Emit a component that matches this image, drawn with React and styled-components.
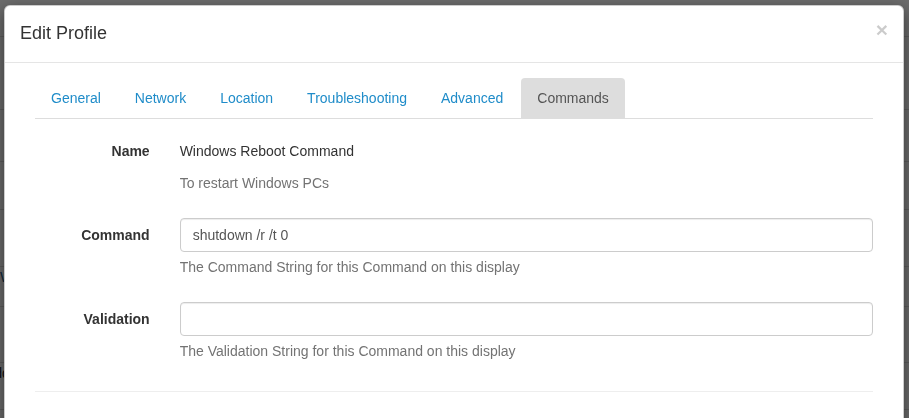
import React from "react";
import styled, { createGlobalStyle } from "styled-components";

const Global = createGlobalStyle`
  html, body { margin: 0; padding: 0; }
  body {
    font-family: "Liberation Sans", Arial, sans-serif;
    font-size: 14px;
    line-height: 1.42857;
    color: #333;
    background: #fff;
    overflow: hidden;
  }
  * { box-sizing: border-box; }
`;

const Page = styled.div`
  width: 909px;
  height: 418px;
  overflow: hidden;
`;

const BgRow = styled.div`
  height: ${(p) => p.h}px;
  border-bottom: 1px solid #dcdcdc;
  display: flex;
  align-items: ${(p) => (p.top ? "flex-start" : "center")};
  padding-top: ${(p) => (p.top ? 1 : 0)}px;
  margin-left: -${(p) => p.shift || 0}px;
  color: ${(p) => p.color || "#222"};
  font-size: 14px;
`;

const Backdrop = styled.div`
  position: fixed;
  inset: 0;
  background: rgba(0, 0, 0, 0.58);
  padding: 5px 5px 0 4px;
`;

const Modal = styled.div`
  background: #fff;
  border: 1px solid rgba(0, 0, 0, 0.2);
  border-radius: 6px;
  box-shadow: 0 5px 15px rgba(0, 0, 0, 0.5);
  height: 600px;
`;

const Header = styled.div`
  display: flex;
  justify-content: space-between;
  align-items: flex-start;
  padding: 15px;
  border-bottom: 1px solid #e5e5e5;
`;

const Title = styled.h4`
  margin: 0;
  font-size: 18px;
  font-weight: 500;
  line-height: 1.42857;
  color: #333;
`;

const Close = styled.button`
  border: 0;
  background: transparent;
  padding: 0;
  margin-top: -2px;
  font-family: "Liberation Sans", Arial, sans-serif;
  font-size: 21px;
  font-weight: 700;
  line-height: 1;
  color: #000;
  opacity: 0.2;
  cursor: pointer;
`;

const Body = styled.div`
  padding: 15px;
`;

const Container = styled.div`
  padding: 0 15px;
`;

const Tabs = styled.ul`
  display: flex;
  list-style: none;
  margin: 0;
  padding: 0;
  border-bottom: 1px solid #ddd;
`;

const Tab = styled.li`
  margin-right: 2px;
  margin-bottom: -1px;
`;

const TabLink = styled.a`
  display: block;
  padding: 10px 16px;
  line-height: 20px;
  border-radius: 4px 4px 0 0;
  text-decoration: none;
  color: ${(p) => (p.active ? "#555" : "#1f8cc9")};
  background: ${(p) => (p.active ? "#ddd" : "transparent")};
  border-bottom: 1px solid ${(p) => (p.active ? "#ddd" : "transparent")};
`;

const Form = styled.div`
  padding-top: 15px;
  margin: 0 -15px;
`;

const Group = styled.div`
  display: grid;
  grid-template-columns: 16.6667% 1fr;
  margin-bottom: 15px;
`;

const Label = styled.label`
  padding: 7px 15px 0;
  text-align: right;
  font-weight: 700;
  line-height: 20px;
`;

const Field = styled.div`
  padding: 0 15px;
`;

const Static = styled.p`
  margin: 0;
  padding: 7px 0;
  min-height: 34px;
  line-height: 20px;
  color: #333;
`;

const Help = styled.span`
  display: block;
  margin: 5px 0 10px;
  line-height: 20px;
  color: #737373;
`;

const Input = styled.input`
  display: block;
  width: 100%;
  height: 34px;
  padding: 6px 12px;
  font-family: "Liberation Sans", Arial, sans-serif;
  font-size: 14px;
  line-height: 20px;
  color: #555;
  background: #fff;
  border: 1px solid #ccc;
  border-radius: 4px;
  box-shadow: inset 0 1px 1px rgba(0, 0, 0, 0.075);
  outline: none;
`;

const Divider = styled.hr`
  margin: 20px 0 0;
  border: 0;
  border-top: 1px solid #eee;
`;

const tabs = ["General", "Network", "Location", "Troubleshooting", "Advanced", "Commands"];

const bgRows = [
  { h: 37, t: "" },
  { h: 73, t: "Settings", shift: 52 },
  { h: 52, t: "" },
  { h: 48, t: "" },
  { h: 57, t: "" },
  { h: 40, t: "Windows", shift: 0, color: "#1f5f8f", top: true },
  { h: 56, t: "" },
  { h: 47, t: "Add", shift: 15, top: true },
];

export default function App() {
  return (
    <Page>
      <Global />
      {bgRows.map((r, i) => (
        <BgRow key={i} h={r.h} shift={r.shift} color={r.color} top={r.top}>
          {r.t}
        </BgRow>
      ))}
      <Backdrop>
        <Modal>
          <Header>
            <Title>Edit Profile</Title>
            <Close aria-label="Close">×</Close>
          </Header>
          <Body>
            <Container>
              <Tabs>
                {tabs.map((t) => (
                  <Tab key={t}>
                    <TabLink href="#" active={t === "Commands" ? 1 : 0}>
                      {t}
                    </TabLink>
                  </Tab>
                ))}
              </Tabs>
              <Form>
                <Group>
                  <Label>Name</Label>
                  <Field>
                    <Static>Windows Reboot Command</Static>
                    <Help>To restart Windows PCs</Help>
                  </Field>
                </Group>
                <Group>
                  <Label>Command</Label>
                  <Field>
                    <Input defaultValue="shutdown /r /t 0" />
                    <Help>The Command String for this Command on this display</Help>
                  </Field>
                </Group>
                <Group>
                  <Label>Validation</Label>
                  <Field>
                    <Input defaultValue="" />
                    <Help>The Validation String for this Command on this display</Help>
                  </Field>
                </Group>
              </Form>
              <Divider />
            </Container>
          </Body>
        </Modal>
      </Backdrop>
    </Page>
  );
}
